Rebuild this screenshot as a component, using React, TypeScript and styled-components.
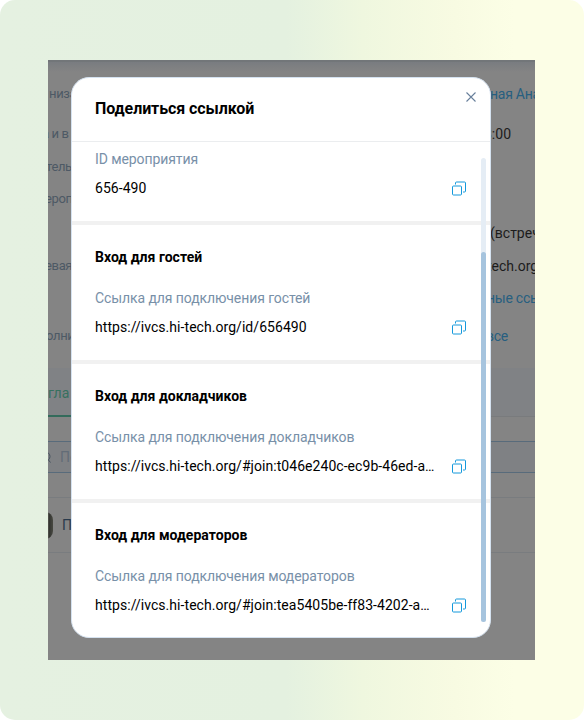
import React from "react";
import styled, { createGlobalStyle } from "styled-components";

const GlobalStyle = createGlobalStyle`
  *, *::before, *::after { box-sizing: border-box; }
  body { margin: 0; background: #fff; font-family: Roboto, "Noto Sans", sans-serif; }
`;

const Backdrop = styled.main`
  width: 584px;
  height: 720px;
  padding: 60px 49px 60px 48px;
  border-radius: 15px;
  background: linear-gradient(90deg, #e5f1e1 0%, #e4f1e0 49%, #eff7df 62%, #f8fbe2 78%, #fcfee6 88%, #fcfee6 100%);
`;

const Screen = styled.div`
  position: relative;
  height: 600px;
  overflow: hidden;
  background: #848484;
`;

const TopShade = styled.div`
  height: 12px;
  border-top: 2px solid #727679;
  background: linear-gradient(#797c80, #848484);
`;

const Details = styled.div`
  height: 296px;
`;

const DetailRow = styled.div<{ $height: number }>`
  display: grid;
  grid-template-columns: 440px 1fr;
  align-items: center;
  height: ${(p) => p.$height}px;
  white-space: nowrap;
`;

const Caption = styled.span<{ $shift: number }>`
  margin-left: ${(p) => p.$shift}px;
  font-size: 13px;
  line-height: 16px;
  letter-spacing: -0.35px;
  color: #4d5965;
`;

const Detail = styled.span<{ $shift: number; $link?: boolean }>`
  margin-left: ${(p) => p.$shift}px;
  font-size: 14px;
  line-height: 16px;
  letter-spacing: ${(p) => (p.$link ? "-0.25px" : "0")};
  color: ${(p) => (p.$link ? "#275f80" : "#1c1c1c")};
`;

const TabBar = styled.div`
  display: flex;
  height: 49px;
  background: #808285;
  border-bottom: 1px solid #797b7d;
`;

const Tab = styled.div`
  display: flex;
  align-items: center;
  width: 90px;
  height: 49px;
  padding-top: 2px;
  font-size: 14px;
  color: #37705f;
  border-bottom: 2px solid #336b5b;
`;

const SearchArea = styled.div`
  height: 81px;
  padding-top: 24px;
  border-bottom: 1px solid #797c7f;
`;

const SearchBox = styled.div`
  display: flex;
  align-items: center;
  height: 32px;
  gap: 9px;
  margin-left: -9px;
  border: 1px solid #586b7b;
  border-width: 1px 0;
  background: #7f8184;
  font-size: 14px;
  color: #626c77;
`;

const PersonRow = styled.div`
  display: flex;
  align-items: center;
  height: 55px;
  border-bottom: 1px solid #797c7f;
  color: #28394b;
  font-size: 14px;
`;

const Avatar = styled.div`
  width: 25px;
  height: 27px;
  margin-left: -20px;
  margin-right: 9px;
  border-radius: 8px;
  background: linear-gradient(90deg, #66665f 80%, #32332f 84%, #484942);
`;

const Dialog = styled.section`
  position: absolute;
  left: 23px;
  top: 17px;
  display: flex;
  flex-direction: column;
  width: 420px;
  height: 561px;
  overflow: hidden;
  border: 1px solid #d5e2f0;
  border-radius: 18px;
  background: #fff;
`;

const DialogHeader = styled.header`
  display: flex;
  justify-content: space-between;
  flex: none;
  height: 64px;
  padding: 14px 14px 0 23px;
  border-bottom: 1px solid #ebedef;
`;

const Title = styled.h1`
  margin: 7px 0 0;
  font-size: 16px;
  line-height: 20px;
  letter-spacing: -0.09px;
  font-weight: 700;
  color: #000;
`;

const CloseButton = styled.button`
  display: block;
  width: 10px;
  height: 10px;
  padding: 0;
  border: 0;
  background: none;
  color: #687f9b;
`;

const DialogBody = styled.div`
  position: relative;
  flex: 1;
`;

const Section = styled.section<{ $first?: boolean }>`
  display: flex;
  flex-direction: column;
  height: ${(p) => (p.$first ? 83 : 139)}px;
  padding: ${(p) => (p.$first ? 9 : 24)}px 23px 0;
  border-bottom: 4px solid #f1f1f1;
  &:last-of-type { border-bottom-color: transparent; }
`;

const Heading = styled.h2`
  margin: 0 0 25px;
  font-size: 14px;
  line-height: 16px;
  letter-spacing: 0.03px;
  font-weight: 700;
  color: #000;
`;

const Label = styled.div`
  font-size: 14px;
  line-height: 16px;
  letter-spacing: -0.09px;
  color: #7890a8;
`;

const ValueRow = styled.div`
  display: flex;
  align-items: center;
  justify-content: space-between;
  margin-top: 13px;
  height: 16px;
`;

const Value = styled.span`
  width: 345px;
  overflow: hidden;
  white-space: nowrap;
  text-overflow: ellipsis;
  font-size: 14px;
  line-height: 17px;
  letter-spacing: 0.05px;
  color: #000;
`;

const CopyButton = styled.button`
  width: 16px;
  height: 16px;
  padding: 0;
  border: 0;
  background: none;
  flex: none;
`;

const ScrollTrack = styled.div`
  position: absolute;
  top: 16px;
  right: 4px;
  width: 5px;
  height: 464px;
  padding-top: 94px;
  border-radius: 3px;
  background: #e5edf5;
`;

const ScrollThumb = styled.div`
  height: 370px;
  border-radius: 3px;
  background: #a6c4de;
`;

const CopyIcon = () => (
  <svg width="16" height="16" viewBox="0 0 16 16" fill="none" stroke="#1499dc" display="block">
    <path d="M4.5 4.5V3Q4.5 2 5.5 2H13.5Q14.5 2 14.5 3V11Q14.5 12 13.5 12H12" />
    <rect x="1.5" y="6" width="9" height="9" rx="1" />
  </svg>
);

const CloseIcon = () => (
  <svg width="10" height="10" viewBox="0 0 10 10" display="block">
    <path d="M.5 .5L9.5 9.5M9.5 .5L.5 9.5" stroke="currentColor" strokeWidth="1.1" />
  </svg>
);

const SearchIcon = () => (
  <svg width="12" height="12" viewBox="0 0 12 12" fill="none" stroke="#46525e">
    <circle cx="6.5" cy="5.5" r="4.5" />
    <path d="M9.5 9L11.5 11.5" />
  </svg>
);

interface DetailItem {
  height: number;
  caption?: string;
  captionShift?: number;
  detail?: string;
  detailShift?: number;
  link?: boolean;
}

const details: DetailItem[] = [
  { height: 44, caption: "низа", captionShift: 1, detail: "ная Ана", detailShift: 2, link: true },
  { height: 36, caption: "а и в", captionShift: -6, detail: "3:00", detailShift: -4 },
  { height: 30, caption: "тель", captionShift: -2 },
  { height: 34, caption: "ероп", captionShift: -3 },
  { height: 34, detail: "(встреч", detailShift: 2 },
  { height: 32, caption: "евая", captionShift: -3, detail: "tech.org", detailShift: -1 },
  { height: 32, detail: "ные ссы", detailShift: -1, link: true },
  { height: 44, caption: "олни", captionShift: -2, detail: "все", detailShift: -2, link: true },
];

const links = [
  { label: "ID мероприятия", value: "656-490" },
  { heading: "Вход для гостей", label: "Ссылка для подключения гостей", value: "https://ivcs.hi-tech.org/id/656490" },
  { heading: "Вход для докладчиков", label: "Ссылка для подключения докладчиков", value: "https://ivcs.hi-tech.org/#join:t046e240c-ec9b-46ed-a…" },
  { heading: "Вход для модераторов", label: "Ссылка для подключения модераторов", value: "https://ivcs.hi-tech.org/#join:tea5405be-ff83-4202-a…" },
];

export default function App() {
  return (
    <>
      <GlobalStyle />
      <Backdrop>
        <Screen>
          <TopShade />
          <Details>
            {details.map((row, i) => (
              <DetailRow key={i} $height={row.height}>
                <Caption $shift={row.captionShift ?? 0}>{row.caption}</Caption>
                <Detail $shift={row.detailShift ?? 0} $link={row.link}>{row.detail}</Detail>
              </DetailRow>
            ))}
          </Details>
          <TabBar><Tab>гла</Tab></TabBar>
          <SearchArea>
            <SearchBox><SearchIcon />По</SearchBox>
          </SearchArea>
          <PersonRow><Avatar />П</PersonRow>
          <Dialog>
            <DialogHeader>
              <Title>Поделиться ссылкой</Title>
              <CloseButton aria-label="Закрыть"><CloseIcon /></CloseButton>
            </DialogHeader>
            <DialogBody>
              {links.map((item, i) => (
                <Section key={item.label} $first={i === 0}>
                  {item.heading && <Heading>{item.heading}</Heading>}
                  <Label>{item.label}</Label>
                  <ValueRow>
                    <Value>{item.value}</Value>
                    <CopyButton aria-label="Скопировать"><CopyIcon /></CopyButton>
                  </ValueRow>
                </Section>
              ))}
              <ScrollTrack><ScrollThumb /></ScrollTrack>
            </DialogBody>
          </Dialog>
        </Screen>
      </Backdrop>
    </>
  );
}
